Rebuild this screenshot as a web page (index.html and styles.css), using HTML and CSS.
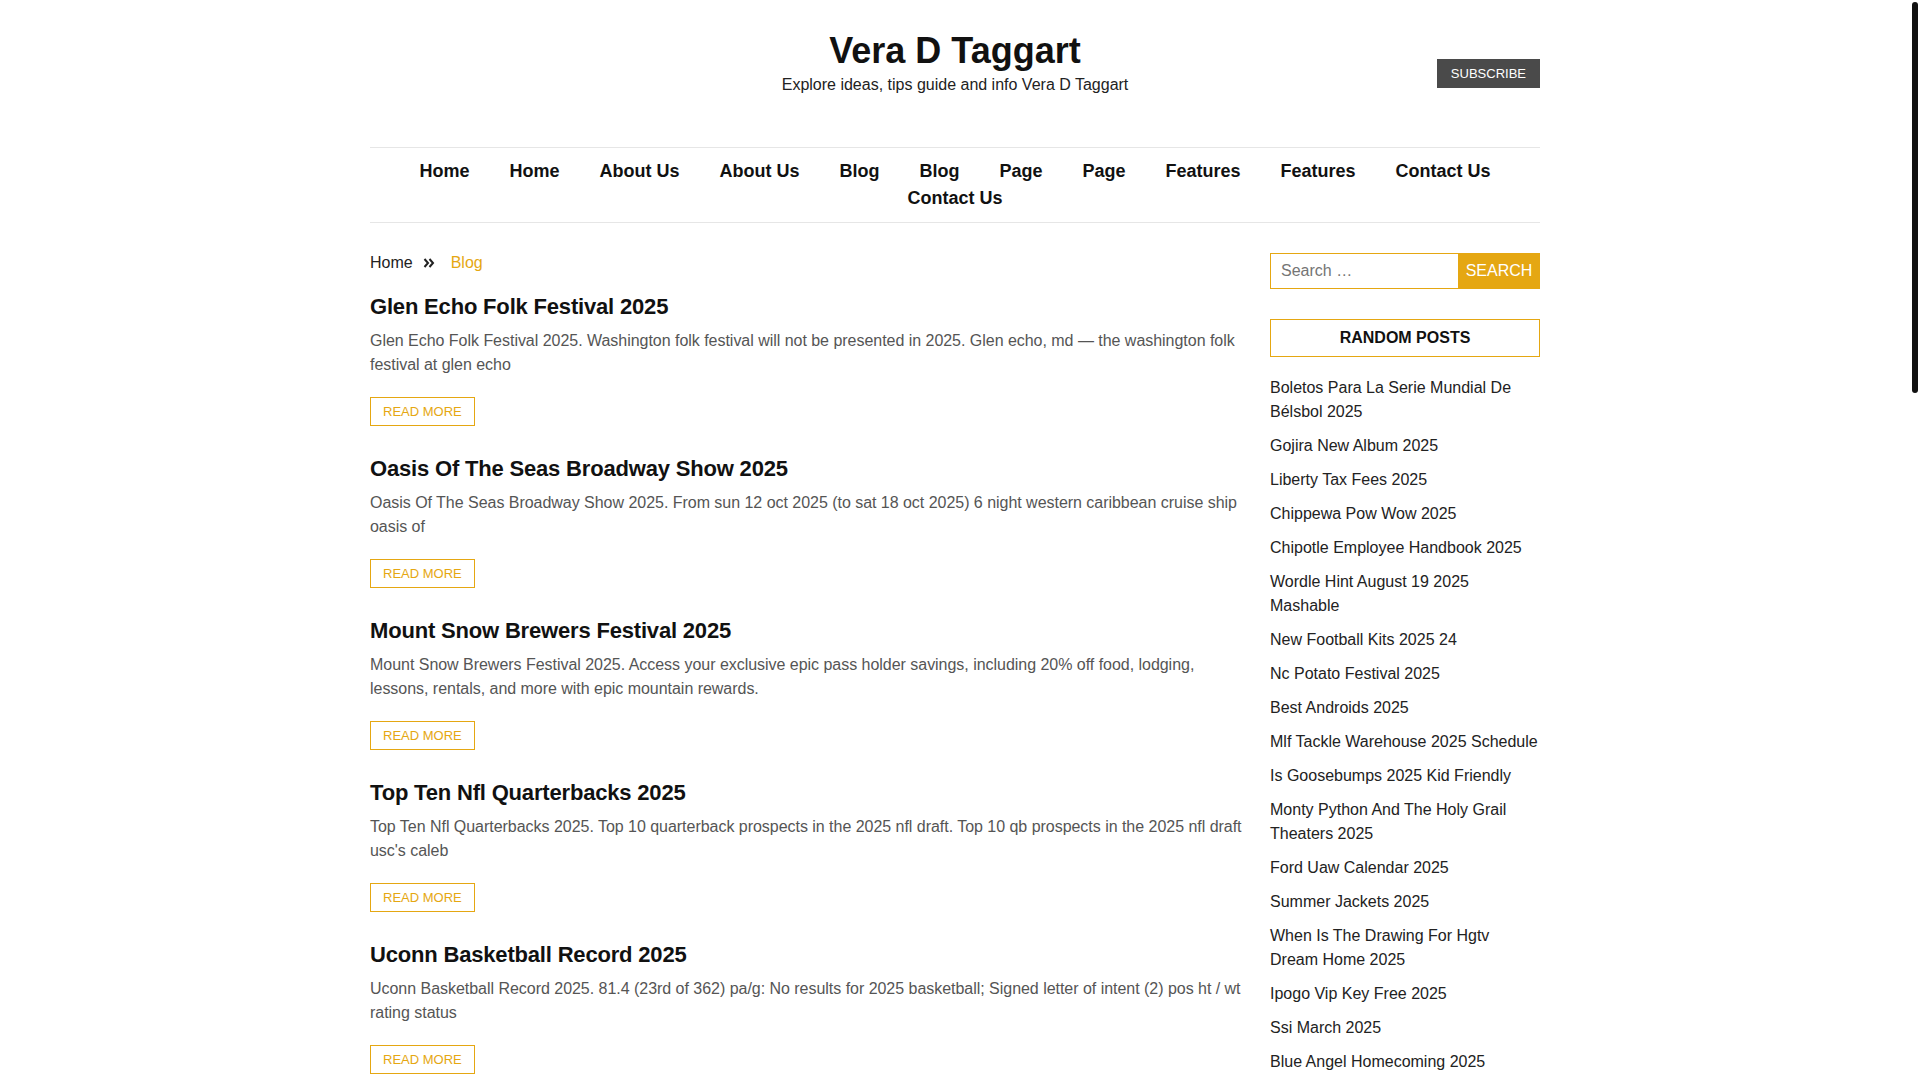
FILE: index.html
```html
<!DOCTYPE html>
<html lang="en">
<head>
<meta charset="utf-8">
<title>Vera D Taggart</title>
<link rel="stylesheet" href="styles.css">
</head>
<body>
<header class="site-header">
  <div class="container header-grid">
    <div class="header-left"></div>
    <div class="branding">
      <h1 class="site-title">Vera D Taggart</h1>
      <p class="site-desc">Explore ideas, tips guide and info Vera D Taggart</p>
    </div>
    <div class="header-right">
      <a class="subscribe" href="#">SUBSCRIBE</a>
    </div>
  </div>
  <div class="container">
    <nav class="main-nav">
      <a href="#">Home</a>
      <a href="#">Home</a>
      <a href="#">About Us</a>
      <a href="#">About Us</a>
      <a href="#">Blog</a>
      <a href="#">Blog</a>
      <a href="#">Page</a>
      <a href="#">Page</a>
      <a href="#">Features</a>
      <a href="#">Features</a>
      <a href="#">Contact Us</a>
      <a href="#">Contact Us</a>
    </nav>
  </div>
</header>

<div class="container content">
  <main class="main-col">
    <div class="breadcrumb">
      <a href="#" class="crumb">Home</a>
      <svg class="crumb-sep" viewBox="0 0 12 10" width="12" height="10" aria-hidden="true"><path d="M1.5 1 L5 5 L1.5 9 M6.5 1 L10 5 L6.5 9" fill="none" stroke="#222" stroke-width="2"/></svg>
      <span class="crumb-current">Blog</span>
    </div>

    <article class="post">
      <h2 class="post-title"><a href="#">Glen Echo Folk Festival 2025</a></h2>
      <p class="post-excerpt">Glen Echo Folk Festival 2025. Washington folk festival will not be presented in 2025. Glen echo, md — the washington folk festival at glen echo</p>
      <a href="#" class="read-more">READ MORE</a>
    </article>
    <article class="post">
      <h2 class="post-title"><a href="#">Oasis Of The Seas Broadway Show 2025</a></h2>
      <p class="post-excerpt">Oasis Of The Seas Broadway Show 2025. From sun 12 oct 2025 (to sat 18 oct 2025) 6 night western caribbean cruise ship oasis of</p>
      <a href="#" class="read-more">READ MORE</a>
    </article>
    <article class="post">
      <h2 class="post-title"><a href="#">Mount Snow Brewers Festival 2025</a></h2>
      <p class="post-excerpt">Mount Snow Brewers Festival 2025. Access your exclusive epic pass holder savings, including 20% off food, lodging, lessons, rentals, and more with epic mountain rewards.</p>
      <a href="#" class="read-more">READ MORE</a>
    </article>
    <article class="post">
      <h2 class="post-title"><a href="#">Top Ten Nfl Quarterbacks 2025</a></h2>
      <p class="post-excerpt">Top Ten Nfl Quarterbacks 2025. Top 10 quarterback prospects in the 2025 nfl draft. Top 10 qb prospects in the 2025 nfl draft usc's caleb</p>
      <a href="#" class="read-more">READ MORE</a>
    </article>
    <article class="post">
      <h2 class="post-title"><a href="#">Uconn Basketball Record 2025</a></h2>
      <p class="post-excerpt">Uconn Basketball Record 2025. 81.4 (23rd of 362) pa/g: No results for 2025 basketball; Signed letter of intent (2) pos ht / wt rating status</p>
      <a href="#" class="read-more">READ MORE</a>
    </article>
    <article class="post">
      <h2 class="post-title"><a href="#">Gojira New Album 2025</a></h2>
      <p class="post-excerpt">Gojira New Album 2025. The french metal band announced a new record and a world tour with dates across europe and north america.</p>
      <a href="#" class="read-more">READ MORE</a>
    </article>
    <article class="post">
      <h2 class="post-title"><a href="#">Liberty Tax Fees 2025</a></h2>
      <p class="post-excerpt">Liberty Tax Fees 2025. Find out how much tax preparation costs this season, including federal and state return pricing and add-ons.</p>
      <a href="#" class="read-more">READ MORE</a>
    </article>
    <article class="post">
      <h2 class="post-title"><a href="#">Chippewa Pow Wow 2025</a></h2>
      <p class="post-excerpt">Chippewa Pow Wow 2025. Dancers, drum groups and vendors gather for the annual celebration of culture, music and community.</p>
      <a href="#" class="read-more">READ MORE</a>
    </article>
    <article class="post">
      <h2 class="post-title"><a href="#">Chipotle Employee Handbook 2025</a></h2>
      <p class="post-excerpt">Chipotle Employee Handbook 2025. Policies, benefits and workplace guidelines for crew members and managers at every restaurant.</p>
      <a href="#" class="read-more">READ MORE</a>
    </article>
    <article class="post">
      <h2 class="post-title"><a href="#">Nc Potato Festival 2025</a></h2>
      <p class="post-excerpt">Nc Potato Festival 2025. Live music, food trucks, arts and crafts and family activities downtown all weekend long.</p>
      <a href="#" class="read-more">READ MORE</a>
    </article>

    <nav class="pagination">
      <span class="page current">1</span>
      <a class="page" href="#">2</a>
      <a class="page" href="#">3</a>
      <a class="page" href="#">Next</a>
    </nav>
  </main>

  <aside class="sidebar">
    <form class="search-form">
      <input class="search-field" type="search" placeholder="Search …">
      <button class="search-submit" type="button">SEARCH</button>
    </form>
    <section class="widget">
      <h3 class="widget-title">RANDOM POSTS</h3>
      <ul class="widget-list">
        <li><a href="#">Boletos Para La Serie Mundial De Bélsbol 2025</a></li>
        <li><a href="#">Gojira New Album 2025</a></li>
        <li><a href="#">Liberty Tax Fees 2025</a></li>
        <li><a href="#">Chippewa Pow Wow 2025</a></li>
        <li><a href="#">Chipotle Employee Handbook 2025</a></li>
        <li><a href="#">Wordle Hint August 19 2025 Mashable</a></li>
        <li><a href="#">New Football Kits 2025 24</a></li>
        <li><a href="#">Nc Potato Festival 2025</a></li>
        <li><a href="#">Best Androids 2025</a></li>
        <li><a href="#">Mlf Tackle Warehouse 2025 Schedule</a></li>
        <li><a href="#">Is Goosebumps 2025 Kid Friendly</a></li>
        <li><a href="#">Monty Python And The Holy Grail Theaters 2025</a></li>
        <li><a href="#">Ford Uaw Calendar 2025</a></li>
        <li><a href="#">Summer Jackets 2025</a></li>
        <li><a href="#">When Is The Drawing For Hgtv Dream Home 2025</a></li>
        <li><a href="#">Ipogo Vip Key Free 2025</a></li>
        <li><a href="#">Ssi March 2025</a></li>
        <li><a href="#">Blue Angel Homecoming 2025</a></li>
      </ul>
    </section>
  </aside>
</div>

<footer class="site-footer">
  <div class="container footer-inner">
    <p>Copyright © 2025 Vera D Taggart. All rights reserved.</p>
  </div>
</footer>

<div class="scrollbar" aria-hidden="true"><div class="scrollbar-thumb"></div></div>
</body>
</html>
```

FILE: styles.css
```css
* {
  box-sizing: border-box;
}

html {
  scrollbar-width: none;
}

::-webkit-scrollbar {
  width: 0;
  height: 0;
}

body {
  margin: 0;
  padding-right: 10px;
  background: #fff;
  color: #222;
  font-family: "Liberation Sans", Arial, Helvetica, sans-serif;
  font-size: 16px;
  line-height: 24px;
}

a {
  text-decoration: none;
  color: inherit;
}

.container {
  width: 1170px;
  margin: 0 auto;
}

/* Fake page scrollbar (overlay on the right edge) */
.scrollbar {
  position: fixed;
  top: 0;
  right: 0;
  width: 10px;
  height: 100vh;
  background: #fff;
}

.scrollbar-thumb {
  position: absolute;
  top: 2px;
  left: 2px;
  width: 6px;
  height: 391px;
  background: #111;
  border-radius: 3px;
}

/* Header */
.header-grid {
  display: grid;
  grid-template-columns: 1fr auto 1fr;
  align-items: start;
  padding: 29px 0 50px;
}

.branding {
  text-align: center;
}

.site-title {
  margin: 0;
  font-size: 36px;
  line-height: 44px;
  font-weight: 700;
  color: #111;
}

.site-desc {
  margin: 0;
  font-size: 16px;
  line-height: 24px;
  color: #222;
}

.header-right {
  display: flex;
  justify-content: flex-end;
  padding-top: 30px;
}

.subscribe {
  display: block;
  background: #4a4a4a;
  color: #fff;
  font-size: 13px;
  line-height: 15px;
  padding: 7px 14px;
}

/* Navigation */
.main-nav {
  display: flex;
  flex-wrap: wrap;
  justify-content: center;
  border-top: 1px solid #e6e6e6;
  border-bottom: 1px solid #e6e6e6;
  padding: 10px 0 10px;
}

.main-nav a {
  font-size: 18px;
  line-height: 27px;
  font-weight: 700;
  color: #111;
  padding: 0 20px;
}

/* Content */
.content {
  display: flex;
  gap: 20px;
  align-items: flex-start;
  padding-top: 28px;
}

.main-col {
  flex: 1;
  min-width: 0;
}

.breadcrumb {
  display: flex;
  align-items: center;
  height: 24px;
  margin-bottom: 18px;
  font-size: 16px;
}

.crumb {
  color: #222;
}

.crumb-sep {
  margin: 0 16px 0 10px;
}

.crumb-current {
  color: #e5a712;
}

.post {
  margin-bottom: 29px;
}

.post-title {
  margin: 0;
  font-size: 22px;
  line-height: 28px;
  font-weight: 700;
  letter-spacing: -0.18px;
  color: #111;
}

.post-excerpt {
  margin: 8px 0 0;
  color: #555;
  font-size: 16px;
  line-height: 24px;
  letter-spacing: -0.03px;
}

.read-more {
  display: inline-block;
  margin-top: 20px;
  border: 1px solid #e5a712;
  color: #e5a712;
  font-size: 13px;
  line-height: 15px;
  padding: 6px 12px;
}

.pagination {
  display: flex;
  gap: 8px;
  margin: 20px 0 40px;
}

.page {
  border: 1px solid #e5a712;
  color: #e5a712;
  padding: 4px 12px;
  font-size: 14px;
  line-height: 20px;
}

.page.current {
  background: #e5a712;
  color: #fff;
}

/* Sidebar */
.sidebar {
  width: 270px;
  flex: none;
  padding-top: 2px;
}

.search-form {
  display: flex;
  height: 36px;
  border: 1px solid #e5a712;
}

.search-field {
  flex: 1;
  min-width: 0;
  border: 0;
  outline: none;
  padding: 0 10px;
  font-family: inherit;
  font-size: 16px;
  color: #222;
  background: #fff;
}

.search-field::placeholder {
  color: #757575;
}

.search-submit {
  flex: none;
  width: 82px;
  border: 0;
  background: #e5a712;
  color: #fff;
  font-family: inherit;
  font-size: 16px;
  padding: 0;
  margin: -1px -1px -1px 0;
}

.widget {
  margin-top: 30px;
}

.widget-title {
  margin: 0;
  border: 1px solid #e5a712;
  text-align: center;
  font-size: 16px;
  line-height: 20px;
  font-weight: 700;
  color: #111;
  padding: 8px 0;
}

.widget-list {
  list-style: none;
  margin: 19px 0 0;
  padding: 0;
}

.widget-list li {
  margin-bottom: 10px;
  font-size: 16px;
  line-height: 24px;
  color: #222;
}

/* Footer */
.site-footer {
  border-top: 1px solid #e6e6e6;
  margin-top: 20px;
}

.footer-inner {
  padding: 30px 0;
  text-align: center;
  color: #555;
  font-size: 14px;
}

.footer-inner p {
  margin: 0;
}
```
